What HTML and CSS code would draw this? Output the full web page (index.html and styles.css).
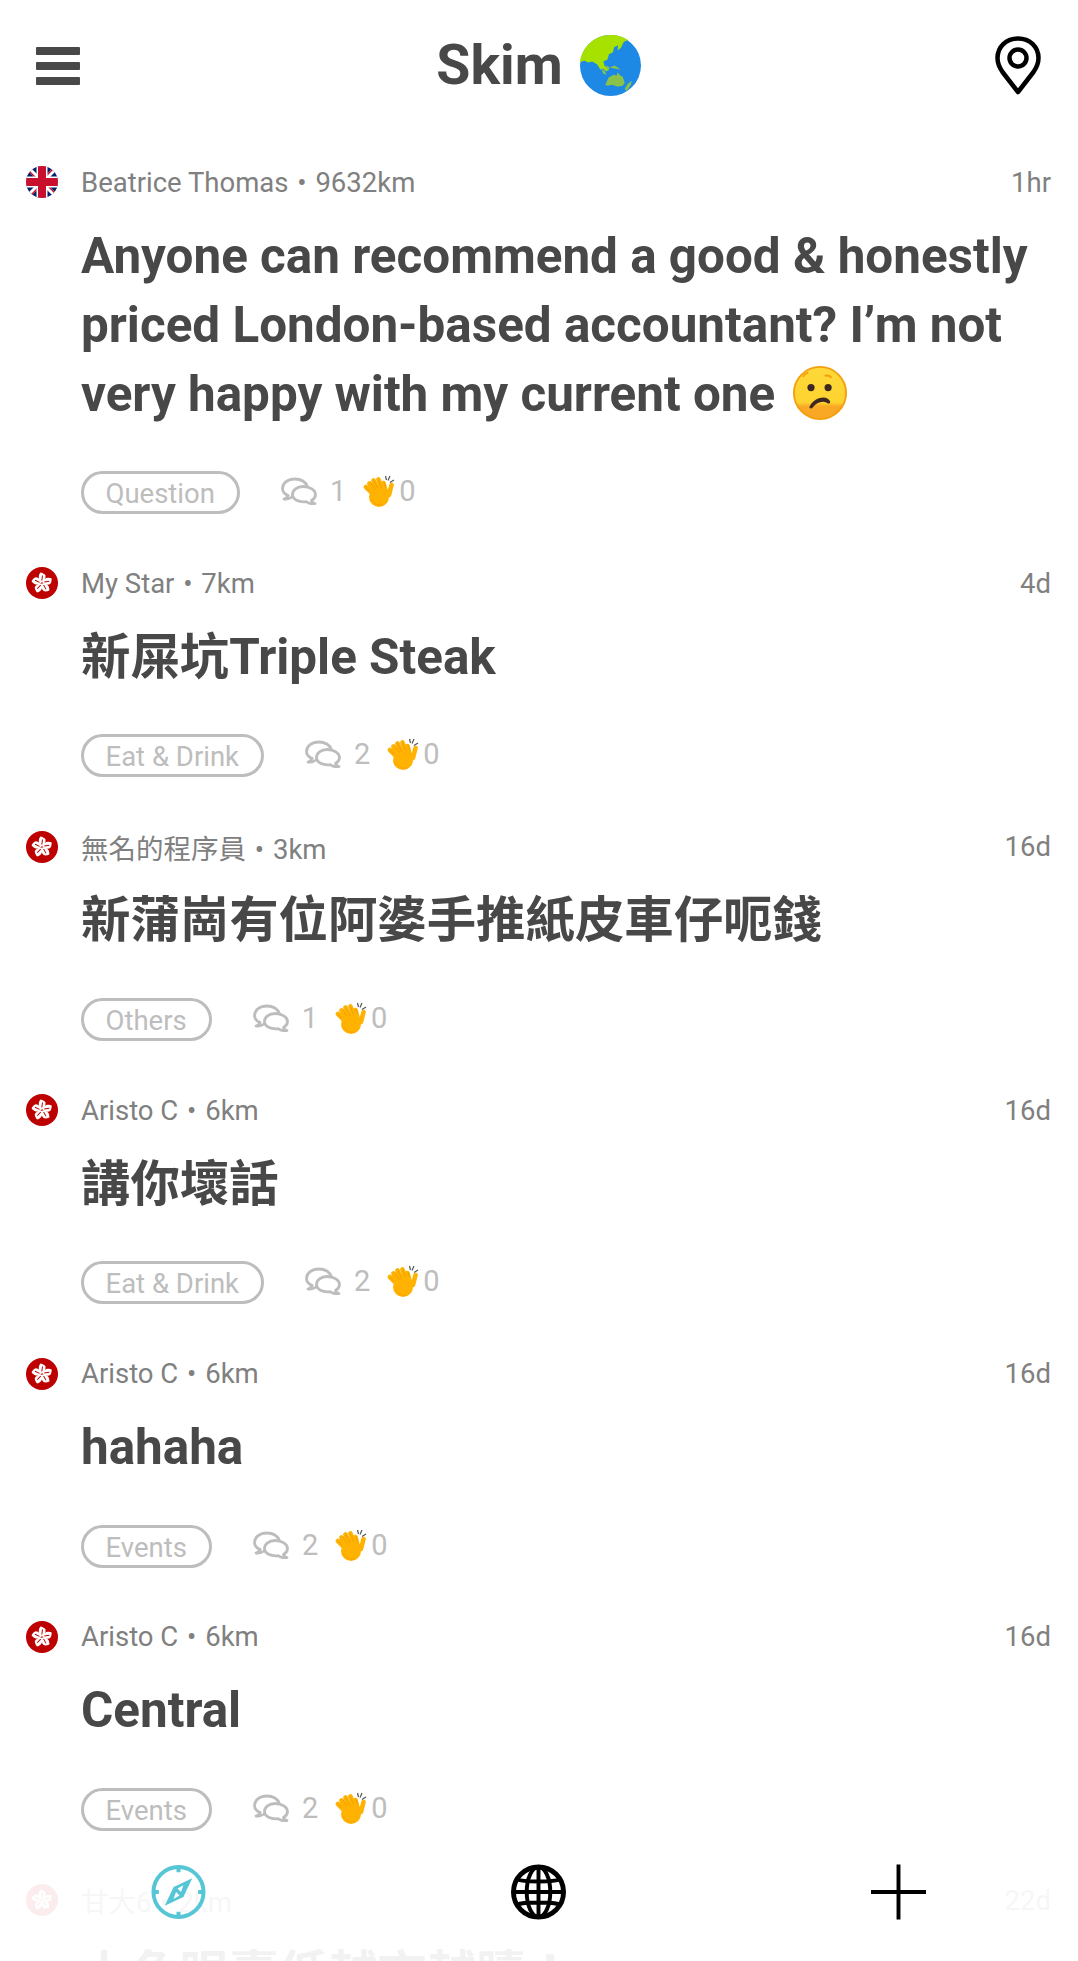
FILE: index.html
```html
<!DOCTYPE html>
<html lang="en">
  <head>
    <meta charset="UTF-8" />
    <meta name="viewport" content="width=device-width, initial-scale=1.0" />
    <title>Skim</title>
    <link rel="stylesheet" href="styles.css">
  </head>
  <body>
    <svg class="defs" width="0" height="0">
      <defs>
        <linearGradient id="face" x1="0" y1="0" x2="0" y2="1">
          <stop offset="0" stop-color="#fed93a" />
          <stop offset="0.68" stop-color="#fdd32f" />
          <stop offset="0.76" stop-color="#f9a825" />
          <stop offset="1" stop-color="#f9a825" />
        </linearGradient>
        <symbol id="hk" viewBox="0 0 32 32">
          <circle cx="16" cy="16" r="16" fill="#bd0000" />
          <g id="petal">
            <path d="M16 15.500C12.500 13.500 11.500 9 14.500 5.500c1.500.2 4 1.200 5 3 .5 2.500-1 5.500-3.500 7z" fill="#fff" />
            <path d="M15.800 13.500 16.500 8.500" stroke="#bd0000" stroke-width="1" />
          </g>
          <use href="#petal" transform="rotate(72 16 16)" />
          <use href="#petal" transform="rotate(144 16 16)" />
          <use href="#petal" transform="rotate(216 16 16)" />
          <use href="#petal" transform="rotate(288 16 16)" />
        </symbol>
        <symbol id="uk" viewBox="0 0 32 32">
          <clipPath id="ukclip"><circle cx="16" cy="16" r="16" /></clipPath>
          <g clip-path="url(#ukclip)">
            <rect width="32" height="32" fill="#012169" />
            <path d="M0 3 29 32h3v-3L3 0H0zM32 3 3 32H0v-3L29 0h3z" fill="#fff" />
            <path d="M0 1 13 14h-2L0 3zM32 31 19 18h2l11 11zM31 0 18 13v-2L29 0zM1 32l13-13v2L3 32z" fill="#c8102e" />
            <path d="M10.500 0h11v10.500H32v11H21.500V32h-11V21.500H0v-11h10.500z" fill="#fff" />
            <path d="M12 0h8v12h12v8H20v12h-8V20H0v-8h12z" fill="#c8102e" />
          </g>
        </symbol>
        <symbol id="chat" viewBox="0 0 36 28">
          <g fill="none" stroke="#bdbdbd" stroke-width="2.800" stroke-linejoin="round" stroke-linecap="round">
            <path d="M7 18.500C3.500 17 1.500 14.500 1.500 11.500 1.500 6 7 2 14 2c6 0 11 3 12.200 7.500" />
            <path d="M7 18.500c-.5 1.500-2 3-4 3.500 3 .5 6-.5 8-2" />
            <path d="M22 9.500c7 0 12.500 3.500 12.500 8 0 2.500-1.500 4.500-4 6 .3 1.500 1.500 2.500 3.500 3-3.500.5-6.500 0-8.500-1.800-8 1-14-2.500-14-7.200 0-4.500 4.500-8 10.500-8z" />
          </g>
        </symbol>
        <symbol id="clap" viewBox="0 0 32 32">
          <path d="M22.500 1l1 4M27 1l-2 4.500M31 5l-4 2.500" stroke="#555" stroke-width="1.200" fill="none" />
          <g stroke="#ffb300" stroke-width="4.600" stroke-linecap="round">
            <path d="M11 20 3 12M13 18 6.500 8.500M16 17 10.500 5.500M20 16 15.500 4.500M23 17l-2.500-9M26 20l2.500-10" />
          </g>
          <circle cx="16" cy="22" r="10" fill="#ffb300" />
          <path d="M12 14.500 7.500 7M15 14 10.500 5M18.500 12.500 15.500 5M6.500 16 3 12M22.500 12l-1.500-5" stroke="#ef9a00" stroke-width=".8" fill="none" />
          <path d="M8 24c3 5 7 7 12 6" stroke="#ffa000" stroke-width="1" fill="none" />
        </symbol>
      </defs>
    </svg>

    <header class="topbar">
      <svg class="menu" viewBox="0 0 44 38">
        <rect y="0" width="44" height="8" rx="1" />
        <rect y="15" width="44" height="8" rx="1" />
        <rect y="30" width="44" height="8" rx="1" />
      </svg>
      <h1>Skim
        <svg class="earth" viewBox="0 0 60 60">
          <circle cx="30" cy="30" r="30" fill="#1e88e5" />
          <path d="M0 27C2 12 14 0 30 0c7 0 13 2 17 5l-4 2-3 6-3 2 .5-5-4 2-1 5-4 2-1.500 5-4 2 1 4 4 4-2 2-3-3-3 1-3-5-5-3-4 1-4-2z" fill="#a6e100" />
          <path d="M25 49l3-7 5-3 3 1 1-3 3 3 2 1 2 6-2 3-5 1-5-2-5 1zM44 53l3-5 4-3-1 4-4 6zM29 32l5-2 6 4-6-1z" fill="#8bc34a" />
          <path d="M21 33l3 2 2 4-3-1zM26 30l3 2-1 3-2-2z" fill="#8bc34a" />
        </svg>
      </h1>
      <svg class="pin" viewBox="0 0 46 59">
        <path d="M23 2.500C11 2.500 2.500 11 2.500 22c0 5 1.500 9 5 14L23 56l15.500-20c3.500-5 5-9 5-14C43.500 11 35 2.500 23 2.500z" fill="none" stroke="#000" stroke-width="4.500" stroke-linejoin="round" />
        <circle cx="23" cy="22" r="8.500" fill="none" stroke="#000" stroke-width="4.500" />
      </svg>
    </header>

    <main class="feed">
      <article class="post">
        <div class="meta">
          <svg class="flag"><use href="#uk" /></svg>
          <span class="who">Beatrice Thomas <i>•</i> 9632km</span>
          <span class="age">1hr</span>
        </div>
        <h2>Anyone can recommend a good &amp; honestly priced London-based accountant? I’m not very happy with my current one
          <svg class="sad" viewBox="0 0 60 60">
            <circle cx="30" cy="30" r="29" fill="url(#face)" stroke="#f59e0b" stroke-width="2" />
            <circle cx="20" cy="24" r="4" fill="#3e2723" />
            <circle cx="39" cy="24" r="4" fill="#3e2723" />
            <path d="M18.500 45C22 38 28 35 34 35c3 0 6 2 7 4 1 3-1 3-3 2-6-3-12 0-16 5-2 2-4.500 1-3.500-1z" fill="#3e2723" />
            <path d="M35 11c3-1 6 0 8 2M11 12c1-2 3-4 6-5" stroke="#f59e0b" stroke-width="2" fill="none" />
          </svg>
        </h2>
        <div class="stats">
          <span class="tag">Question</span>
          <svg class="chat"><use href="#chat" /></svg>
          <span class="num">1</span>
          <svg class="clap"><use href="#clap" /></svg>
          <span class="claps">0</span>
        </div>
      </article>

      <article class="post">
        <div class="meta">
          <svg class="flag"><use href="#hk" /></svg>
          <span class="who">My Star <i>•</i> 7km</span>
          <span class="age">4d</span>
        </div>
        <h2>新屎坑Triple Steak</h2>
        <div class="stats">
          <span class="tag">Eat &amp; Drink</span>
          <svg class="chat"><use href="#chat" /></svg>
          <span class="num">2</span>
          <svg class="clap"><use href="#clap" /></svg>
          <span class="claps">0</span>
        </div>
      </article>

      <article class="post">
        <div class="meta">
          <svg class="flag"><use href="#hk" /></svg>
          <span class="who">無名的程序員 <i>•</i> 3km</span>
          <span class="age">16d</span>
        </div>
        <h2>新蒲崗有位阿婆手推紙皮車仔呃錢</h2>
        <div class="stats">
          <span class="tag">Others</span>
          <svg class="chat"><use href="#chat" /></svg>
          <span class="num">1</span>
          <svg class="clap"><use href="#clap" /></svg>
          <span class="claps">0</span>
        </div>
      </article>

      <article class="post">
        <div class="meta">
          <svg class="flag"><use href="#hk" /></svg>
          <span class="who">Aristo C <i>•</i> 6km</span>
          <span class="age">16d</span>
        </div>
        <h2>講你壞話</h2>
        <div class="stats">
          <span class="tag">Eat &amp; Drink</span>
          <svg class="chat"><use href="#chat" /></svg>
          <span class="num">2</span>
          <svg class="clap"><use href="#clap" /></svg>
          <span class="claps">0</span>
        </div>
      </article>

      <article class="post">
        <div class="meta">
          <svg class="flag"><use href="#hk" /></svg>
          <span class="who">Aristo C <i>•</i> 6km</span>
          <span class="age">16d</span>
        </div>
        <h2>hahaha</h2>
        <div class="stats">
          <span class="tag">Events</span>
          <svg class="chat"><use href="#chat" /></svg>
          <span class="num">2</span>
          <svg class="clap"><use href="#clap" /></svg>
          <span class="claps">0</span>
        </div>
      </article>

      <article class="post">
        <div class="meta">
          <svg class="flag"><use href="#hk" /></svg>
          <span class="who">Aristo C <i>•</i> 6km</span>
          <span class="age">16d</span>
        </div>
        <h2>Central</h2>
        <div class="stats">
          <span class="tag">Events</span>
          <svg class="chat"><use href="#chat" /></svg>
          <span class="num">2</span>
          <svg class="clap"><use href="#clap" /></svg>
          <span class="claps">0</span>
        </div>
      </article>

      <article class="post">
        <div class="meta">
          <svg class="flag"><use href="#hk" /></svg>
          <span class="who">甘大6 <i>•</i> 2km</span>
          <span class="age">22d</span>
        </div>
        <h2>上角眼壽低越市越贖！</h2>
      </article>
    </main>

    <nav class="tabbar">
      <svg class="tab" viewBox="0 0 56 56">
        <circle cx="28" cy="28" r="25.500" fill="none" stroke="#56c5d6" stroke-width="4" />
        <path d="M28 1v7M28 48v7M1 28h7M48 28h7" stroke="#56c5d6" stroke-width="4" />
        <path d="M42 14 33 33 14 42 23 23z" fill="#56c5d6" />
        <path d="M33 21l-6 3.500 3.500 3.500zM23 35l6-3.500-3.500-3.500z" fill="#fff" />
      </svg>
      <svg class="tab" viewBox="0 0 56 56">
        <g fill="none" stroke="#000" stroke-width="4">
          <circle cx="28" cy="28" r="25.500" stroke-width="5" />
          <ellipse cx="28" cy="28" rx="12" ry="25.500" />
          <path d="M28 2v52M2 28h52M6 15c6 3 38 3 44 0M6 41c6-3 38-3 44 0" />
        </g>
      </svg>
      <svg class="tab" viewBox="0 0 56 56">
        <path d="M28 0v56M0 28h56" stroke="#000" stroke-width="4" />
      </svg>
    </nav>
  </body>
</html>
```

FILE: styles.css
```css
* {
  box-sizing: border-box;
}

html,
body {
  margin: 0;
  height: 100%;
  overflow: hidden;
}

body {
  position: relative;
  background-color: #fff;
  color: #484848;
  font-family: Roboto, "Noto Sans CJK TC", sans-serif;
}

.defs {
  position: absolute;
}

.topbar {
  display: grid;
  grid-template-columns: 1fr auto 1fr;
  align-items: center;
  height: 129px;
  padding: 2px 37px 0 36px;
}

.topbar h1 {
  display: flex;
  align-items: center;
  gap: 17px;
  margin: 0;
  font-size: 55.4px;
  font-weight: 700;
  line-height: 62px;
}

.menu {
  width: 44px;
  height: 38px;
  fill: #484848;
}

.earth {
  width: 61px;
  height: 61px;
}

.pin {
  justify-self: end;
  width: 46px;
  height: 59px;
}

.post {
  padding: 36px 27px 16.4px 26px;
}

.meta {
  display: flex;
  align-items: center;
  height: 34px;
  color: #808080;
  font-size: 27.5px;
}

.flag {
  flex: none;
  width: 32px;
  height: 32px;
  margin-right: 23px;
}

.who i {
  margin: 0 2px;
  font-style: normal;
}

.age {
  margin-left: auto;
}

.post h2 {
  margin: 22.5px 0 0 55px;
  font-size: 49.4px;
  font-weight: 700;
  line-height: 69px;
}

.sad {
  width: 54px;
  height: 54px;
  margin-left: 6px;
  vertical-align: -9px;
}

.stats {
  display: flex;
  align-items: center;
  margin: 42.5px 0 0 54.5px;
  color: #bdbdbd;
  font-size: 29px;
}

.tag {
  height: 43px;
  padding: 0 22px;
  border: 3px solid #bdbdbd;
  border-radius: 22px;
  font-size: 27.5px;
  line-height: 39px;
}

.chat {
  width: 36px;
  height: 28px;
  margin: -3px 13px 0 41px;
}

.num {
  margin-top: -3px;
}

.clap {
  width: 32px;
  height: 32px;
  margin: -3px 0 0 17px;
}

.claps {
  margin: -3px 0 0 4px;
}

.tabbar {
  position: absolute;
  left: 0;
  right: 0;
  bottom: 0;
  display: flex;
  justify-content: space-between;
  height: 110px;
  padding: 13px 152px 0 151px;
  background-color: rgba(255, 255, 255, 0.93);
}

.tab {
  width: 55px;
  height: 56px;
}
```
